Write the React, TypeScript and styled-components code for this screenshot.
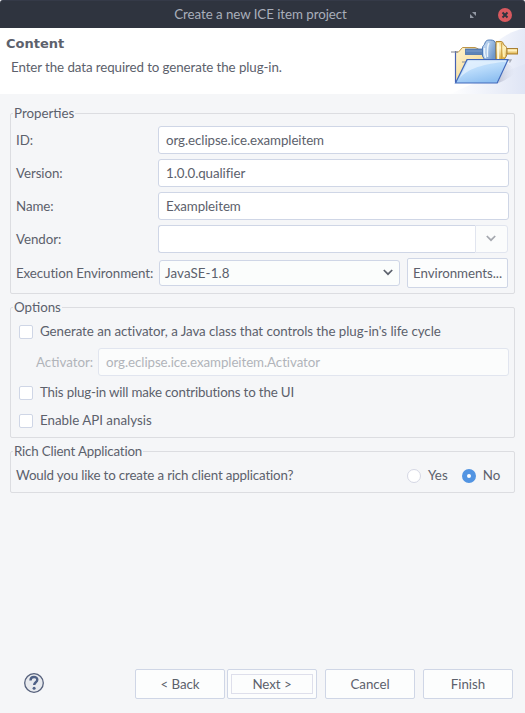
import React from "react";
import styled, { createGlobalStyle } from "styled-components";

const GlobalStyle = createGlobalStyle`
  *, *::before, *::after { box-sizing: border-box; }
  html, body { margin: 0; padding: 0; background: #f5f6f8; }
  body, input, button {
    font-family: Lato, sans-serif;
    font-size: 13.33px;
    line-height: 16px;
    color: #5c616c;
  }
`;

const Window = styled.div`
  width: 525px;
  height: 713px;
  display: flex;
  flex-direction: column;
  background: #f5f6f8;
  overflow: hidden;
  white-space: nowrap;
`;

const TitleBar = styled.header`
  height: 28px;
  flex: none;
  display: grid;
  grid-template-columns: 56px 1fr 56px;
  align-items: center;
  background: #2f343f;
  border-top: 1px solid #353a48;
  border-radius: 3px 3px 0 0;
  color: #a9afbb;
`;

const WindowTitle = styled.div`
  grid-column: 2;
  text-align: center;
  padding: 0 4px 2px 0;
  letter-spacing: -0.06px;
`;

const WindowControls = styled.div`
  display: flex;
  align-items: center;
  gap: 21px;
`;

const Banner = styled.section`
  height: 66px;
  flex: none;
  display: flex;
  justify-content: space-between;
  background: #fff;
`;

const BannerText = styled.div`
  padding: 8px 0 0 6px;
`;

const BannerTitle = styled.h1`
  margin: 0;
  font: bold 13px/16px "DejaVu Sans", sans-serif;
`;

const BannerMessage = styled.p`
  margin: 7px 0 0 5px;
  letter-spacing: -0.09px;
`;

const Body = styled.main`
  flex: 1;
  padding: 19px 10px 0;
`;

const Group = styled.fieldset<{ $height: number }>`
  position: relative;
  height: ${(p) => p.$height}px;
  margin: 0 0 13px;
  padding: 0 5px;
  border: 1px solid #dcdde1;
  border-radius: 2px;
  min-width: 0;
`;

const GroupTitle = styled.div<{ $tracking?: number }>`
  position: absolute;
  left: 2px;
  top: -9px;
  padding: 0 1px;
  background: #f5f6f8;
  letter-spacing: ${(p) => p.$tracking ?? 0}px;
`;

const Row = styled.div<{ $height: number }>`
  height: ${(p) => p.$height}px;
  display: flex;
  align-items: center;
`;

const PropertyRows = styled.div`
  padding-top: 12px;
  display: flex;
  flex-direction: column;
  gap: 5px;
`;

const Label = styled.label<{ $width?: number; $muted?: boolean; $tracking?: number }>`
  width: ${(p) => (p.$width ? `${p.$width}px` : "auto")};
  flex: none;
  color: ${(p) => (p.$muted ? "#b1b4ba" : "inherit")};
  letter-spacing: ${(p) => (p.$tracking ? `${p.$tracking}px` : "normal")};
`;

const TextField = styled.input`
  flex: 1;
  min-width: 0;
  height: 28px;
  padding: 0 7px 1px;
  border: 1px solid #cfd6e6;
  border-radius: 3px;
  background: #fff;
  outline: none;
  letter-spacing: -0.07px;
  &:disabled {
    color: #b1b4ba;
    border-color: #e1e5ef;
    background: #fbfcfc;
  }
`;

const ComboField = styled(TextField)`
  border-right: 0;
  border-radius: 3px 0 0 3px;
`;

const ComboButton = styled.div`
  width: 33px;
  height: 28px;
  margin-right: 1px;
  display: grid;
  place-items: center;
  padding: 0 1px 2px 0;
  border: 1px solid #e1e5ef;
  border-radius: 0 3px 3px 0;
  background: #fbfcfc;
  color: #a4a7ae;
`;

const Select = styled.div`
  width: 241px;
  height: 26px;
  display: flex;
  align-items: center;
  justify-content: space-between;
  padding: 0 6px 0 5px;
  border: 1px solid #cfd6e6;
  border-radius: 3px;
  background: #fbfdfc;
  letter-spacing: 0.1px;
  svg { margin-bottom: 2px; }
`;

const Button = styled.button<{ $width: number; $left?: number; $focused?: boolean }>`
  width: ${(p) => p.$width}px;
  height: 30px;
  margin: 0 0 0 ${(p) => p.$left ?? 0}px;
  padding: 4px 3px;
  border: 1px solid #cfd6e6;
  border-radius: 2px;
  background: #fcfdfd;
  letter-spacing: -0.05px;
  span {
    display: block;
    height: 20px;
    line-height: 18px;
    border: 1px solid ${(p) => (p.$focused ? "#dedfeb" : "transparent")};
  }
`;

const CheckBox = styled.span`
  width: 14px;
  height: 14px;
  flex: none;
  margin: 0 7px 0 3px;
  border: 1px solid #cfd6e6;
  border-radius: 2px;
  background: #fff;
`;

const OptionRow = styled(Row)`
  ${Label} { padding-bottom: 2px; }
`;

const ActivatorRow = styled(Row)`
  margin: -8px 0 3px;
  padding-left: 20px;
`;

const Radio = styled.span<{ $checked?: boolean }>`
  width: 14px;
  height: 14px;
  flex: none;
  border-radius: 50%;
  border: ${(p) => (p.$checked ? "5px solid #5294e2" : "1px solid #d5d7e4")};
  background: #fff;
`;

const Choice = styled.div<{ $left: number }>`
  display: flex;
  align-items: center;
  gap: 7px;
  margin-left: ${(p) => p.$left}px;
`;

const Footer = styled.footer`
  height: 44px;
  flex: none;
  display: flex;
  align-items: flex-start;
  padding-left: 23px;
`;

const Help = styled.svg`
  width: 22px;
  height: 22px;
  margin: 3px 90px 0 0;
`;

const Chevron = () => (
  <svg width="10" height="7" viewBox="0 0 10 7" fill="none" stroke="currentColor" strokeWidth="1.7">
    <path d="M0.8 1 L5 5.2 L9.2 1" />
  </svg>
);

const PlugFolder = () => (
  <svg width="75" height="66" viewBox="0 0 75 66">
    <defs>
      <linearGradient id="sweep" x1="0" y1="0" x2="1" y2="0.2">
        <stop offset="0" stopColor="#fafbfe" />
        <stop offset="1" stopColor="#e4e9f7" />
      </linearGradient>
      <linearGradient id="sweepLow" x1="0" y1="0" x2="1" y2="0">
        <stop offset="0" stopColor="#fff" />
        <stop offset="1" stopColor="#dfe5f5" />
      </linearGradient>
      <linearGradient id="front" x1="0" y1="0" x2="0.5" y2="1">
        <stop offset="0" stopColor="#d3e9fd" />
        <stop offset="0.5" stopColor="#b9dbfb" />
        <stop offset="1" stopColor="#8fc0f1" />
      </linearGradient>
      <linearGradient id="back" x1="0" y1="0" x2="1" y2="1">
        <stop offset="0" stopColor="#fff4cf" />
        <stop offset="1" stopColor="#f1cd78" />
      </linearGradient>
      <linearGradient id="blue" x1="0" y1="0" x2="1" y2="0.6">
        <stop offset="0" stopColor="#cfe0f5" />
        <stop offset="0.5" stopColor="#a6c4e6" />
        <stop offset="1" stopColor="#6f98cb" />
      </linearGradient>
      <linearGradient id="gold" x1="0" y1="0" x2="0" y2="1">
        <stop offset="0" stopColor="#f3d581" />
        <stop offset="0.35" stopColor="#fff3c4" />
        <stop offset="1" stopColor="#dcab3c" />
      </linearGradient>
      <linearGradient id="shade" x1="0" y1="0" x2="1" y2="0">
        <stop offset="0" stopColor="#9ba1b9" stopOpacity="0.55" />
        <stop offset="1" stopColor="#c9ccdd" stopOpacity="0" />
      </linearGradient>
    </defs>
    <path d="M75 0 C58 4 46 12 38 24 L45 50 L75 45 Z" fill="url(#sweep)" />
    <path d="M0 66 L22 56 L75 36 V66 Z" fill="url(#sweepLow)" />
    <path d="M48 55 L56 35 C66 39 67 47 58 50 C54 53 51 54 48 55 Z" fill="url(#shade)" />
    <path d="M5.500 54.500 V24 H8.500 L12.500 19.500 H25 L28.500 21.500 H46 V32 L36 50 Z" fill="url(#back)" />
    <path d="M6 24 H8.500 L12.500 19.500 H25 L28.500 21" stroke="#bd9547" fill="none" />
    <path d="M5.500 23 V54.500" stroke="#4562b4" strokeWidth="1.200" fill="none" />
    <path d="M1 24 H8" stroke="#858995" strokeWidth="1.600" opacity="0.65" />
    <path d="M12 34 H17" stroke="#858995" strokeWidth="1.600" opacity="0.6" />
    <rect x="15.500" y="21" width="18" height="5.500" fill="#5d84b8" stroke="#4a72ae" strokeWidth="0.800" />
    <path d="M16 23 H33" stroke="#7699c8" strokeWidth="1.300" />
    <path d="M34.500 31.500 L32.500 28 V20 C32.500 17.500 34.500 17.500 35 15 C36 12 38 12 40.500 12 C43 12 45.500 13 45.500 15.500 V31.500 Z" fill="url(#blue)" stroke="#4d79b6" />
    <path d="M34.500 20 Q34 25 35.500 30 M39 15 Q37 18 37.500 29" stroke="#eaf4fd" strokeWidth="1.500" fill="none" />
    <path d="M46 13.500 H51.500 C53 13.500 53 16 54 17 C56.500 18 57 20 57 24 C57 28 56 29 54 31.500 H46 Z" fill="url(#gold)" stroke="#b18532" />
    <path d="M48.200 15 V31" stroke="#fffadf" strokeWidth="2" />
    <path d="M51.700 14.500 V31" stroke="#cb9d3c" strokeWidth="1" />
    <path d="M54 18.500 Q53.500 24 54 29" stroke="#fff0b5" strokeWidth="1.800" fill="none" />
    <rect x="57" y="20.500" width="10.500" height="5.500" fill="url(#gold)" stroke="#a98034" />
    <path d="M5.500 55 L17 31.700 H58 L47.200 55 Z" fill="url(#front)" stroke="#4068bb" strokeWidth="1.200" />
    <path d="M18 33 H56" stroke="#f2f9ff" strokeWidth="1" />
    <path d="M8 53 C15 41 31 37 52 34 H18 Z" fill="#f4faff" opacity="0.55" />
    <path d="M58 32 H61 L59.500 34.500" stroke="#777b87" fill="none" strokeWidth="1.300" opacity="0.6" />
  </svg>
);

const properties = [
  { label: "ID:", value: "org.eclipse.ice.exampleitem" },
  { label: "Version:", value: "1.0.0.qualifier" },
  { label: "Name:", value: "Exampleitem" },
];

export default function App() {
  return (
    <>
      <GlobalStyle />
      <Window>
        <TitleBar>
          <WindowTitle>Create a new ICE item project</WindowTitle>
          <WindowControls>
            <svg width="8" height="8" viewBox="0 0 8 8" fill="#9298a4">
              <path d="M3 1 H7 V5 Z M1 3 L5 7 H1 Z" />
            </svg>
            <svg width="14" height="14" viewBox="0 0 14 14">
              <circle cx="7" cy="7" r="7" fill="#d8595f" />
              <path d="M4.500 4.500 L9.500 9.500 M9.500 4.500 L4.500 9.500" stroke="#2f343f" strokeWidth="2" />
            </svg>
          </WindowControls>
        </TitleBar>
        <Banner>
          <BannerText>
            <BannerTitle>Content</BannerTitle>
            <BannerMessage>Enter the data required to generate the plug-in.</BannerMessage>
          </BannerText>
          <PlugFolder />
        </Banner>
        <Body>
          <Group $height={181}>
            <GroupTitle>Properties</GroupTitle>
            <PropertyRows>
              {properties.map((p) => (
                <Row $height={28} key={p.label}>
                  <Label $width={142} $tracking={-0.07}>{p.label}</Label>
                  <TextField defaultValue={p.value} />
                </Row>
              ))}
              <Row $height={28}>
                <Label $width={142} $tracking={-0.07}>Vendor:</Label>
                <ComboField />
                <ComboButton><Chevron /></ComboButton>
              </Row>
              <Row $height={30}>
                <Label $width={143} $tracking={-0.09}>Execution Environment:</Label>
                <Select>
                  JavaSE-1.8
                  <Chevron />
                </Select>
                <Button $width={101} $left={7}><span>Environments...</span></Button>
              </Row>
            </PropertyRows>
          </Group>
          <Group $height={131}>
            <GroupTitle>Options</GroupTitle>
            <OptionRow $height={48}>
              <CheckBox />
              <Label $tracking={-0.055}>
                Generate an activator, a Java class that controls the plug-in's life cycle
              </Label>
            </OptionRow>
            <ActivatorRow $height={28}>
              <Label $width={62} $muted>Activator:</Label>
              <TextField disabled defaultValue="org.eclipse.ice.exampleitem.Activator" />
            </ActivatorRow>
            <OptionRow $height={28}>
              <CheckBox />
              <Label $tracking={-0.175}>This plug-in will make contributions to the UI</Label>
            </OptionRow>
            <OptionRow $height={28}>
              <CheckBox />
              <Label>Enable API analysis</Label>
            </OptionRow>
          </Group>
          <Group $height={42}>
            <GroupTitle $tracking={-0.18}>Rich Client Application</GroupTitle>
            <OptionRow $height={48}>
              <Label $width={391} $tracking={-0.16}>
                Would you like to create a rich client application?
              </Label>
              <Choice $left={0}><Radio /><Label>Yes</Label></Choice>
              <Choice $left={14}><Radio $checked /><Label>No</Label></Choice>
            </OptionRow>
          </Group>
        </Body>
        <Footer>
          <Help viewBox="0 0 22 22">
            <circle cx="11" cy="11" r="9.300" fill="#e8eaee" stroke="#56617c" strokeWidth="1.300" />
            <path d="M7.500 8.400 C7.500 3.800 14.300 4 14.300 7.800 C14.300 10.300 11.200 10.200 11.200 13" fill="none" stroke="#4f6186" strokeWidth="2.400" />
            <circle cx="11.100" cy="16.200" r="1.500" fill="#4f6186" />
          </Help>
          <Button $width={90}><span>&lt; Back</span></Button>
          <Button $width={90} $left={2} $focused><span>Next &gt;</span></Button>
          <Button $width={90} $left={8}><span>Cancel</span></Button>
          <Button $width={90} $left={8}><span>Finish</span></Button>
        </Footer>
      </Window>
    </>
  );
}
